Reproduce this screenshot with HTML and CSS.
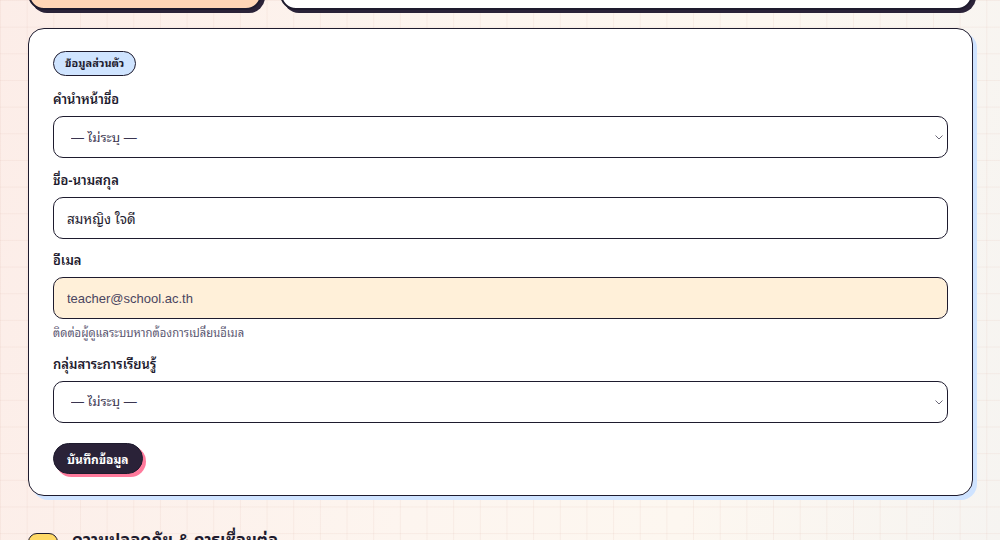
FILE: index.html
```html
<!DOCTYPE html>
<html lang="th">
<head>
<meta charset="utf-8">
<title>โปรไฟล์</title>
<link rel="stylesheet" href="styles.css">
</head>
<body>
<div class="page">
  <div class="top-row">
    <div class="top-card peach"></div>
    <div class="top-card white"></div>
  </div>

  <section class="card">
    <span class="badge">ข้อมูลส่วนตัว</span>
    <form class="form">
      <div class="field">
        <label class="label" for="prefix">คำนำหน้าชื่อ</label>
        <div class="select-wrap">
          <select id="prefix" class="control select">
            <option>— ไม่ระบุ —</option>
          </select>
          <svg class="chevron" width="8" height="5" viewBox="0 0 8 5" aria-hidden="true"><path d="M0.5 0.5 L4 4 L7.5 0.5" fill="none" stroke="#6b6878" stroke-width="1"/></svg>
        </div>
      </div>
      <div class="field">
        <label class="label" for="name">ชื่อ-นามสกุล</label>
        <input id="name" class="control" type="text" value="สมหญิง ใจดี">
      </div>
      <div class="field">
        <label class="label" for="email">อีเมล</label>
        <input id="email" class="control readonly" type="text" value="teacher@school.ac.th" readonly>
        <p class="help">ติดต่อผู้ดูแลระบบหากต้องการเปลี่ยนอีเมล</p>
      </div>
      <div class="field">
        <label class="label" for="group">กลุ่มสาระการเรียนรู้</label>
        <div class="select-wrap">
          <select id="group" class="control select">
            <option>— ไม่ระบุ —</option>
          </select>
          <svg class="chevron" width="8" height="5" viewBox="0 0 8 5" aria-hidden="true"><path d="M0.5 0.5 L4 4 L7.5 0.5" fill="none" stroke="#6b6878" stroke-width="1"/></svg>
        </div>
      </div>
      <div class="actions">
        <button type="button" class="btn">บันทึกข้อมูล</button>
      </div>
    </form>
  </section>

  <h2 class="section-title"><span class="section-icon"></span><span class="section-text">ความปลอดภัย &amp; การเชื่อมต่อ</span></h2>
</div>
</body>
</html>
```

FILE: styles.css
```css
* { box-sizing: border-box; }

html, body {
  margin: 0;
  padding: 0;
}

body {
  font-family: "Liberation Sans", "Noto Sans Thai Looped", sans-serif;
  color: #1e1b2e;
  background-color: #fdf6ef;
  background-image:
    linear-gradient(rgba(230, 200, 190, 0.22) 1px, transparent 1px),
    linear-gradient(90deg, rgba(230, 200, 190, 0.22) 1px, transparent 1px),
    linear-gradient(100deg, #fcede8 0%, #fdf5ef 45%, #fdf7f0 70%, #f6f4f1 100%);
  background-size: 26.667px 26.667px, 26.667px 26.667px, 100% 100%;
  min-height: 540px;
  overflow: hidden;
}

.page {
  padding: 0 27px 0 28px;
  margin-top: -80px;
}

.top-row {
  display: grid;
  grid-template-columns: 234px 1fr;
  gap: 18px;
}

.top-card {
  height: 90px;
  border: 2px solid #1e1b2e;
  border-radius: 16px;
  box-shadow: 3px 3px 0 #2a2238;
}

.top-card.peach { background: #ffd6b6; }
.top-card.white { background: #ffffff; }

.card {
  margin-top: 18px;
  display: flex;
  flex-direction: column;
  align-items: flex-start;
  background: #ffffff;
  border: 1.5px solid #1e1b2e;
  border-radius: 16px;
  box-shadow: 4px 4px 0 #cfe3ff;
  padding: 21.5px 24px 21px 24px;
}

.badge {
  height: 25px;
  line-height: 22px;
  padding: 0 11px;
  background: #cfe4ff;
  border: 1.5px solid #1e1b2e;
  border-radius: 999px;
  font-size: 11px;
  font-weight: 700;
}

.form {
  align-self: stretch;
  margin-top: 14.5px;
  display: flex;
  flex-direction: column;
  gap: 12.5px;
}

.field {
  display: flex;
  flex-direction: column;
}

.label {
  font-size: 13px;
  line-height: 20px;
  font-weight: 600;
  margin-bottom: 6px;
}

.control {
  display: block;
  width: 100%;
  height: 42px;
  border: 1.5px solid #1e1b2e;
  border-radius: 10px;
  background-color: #ffffff;
  padding: 0 13px;
  font-family: inherit;
  font-size: 13.5px;
  color: #1e1b2e;
  outline: none;
}

.select-wrap {
  position: relative;
}

.select {
  -webkit-appearance: none;
  appearance: none;
  color: #3a3550;
  font-size: 13px;
  padding-left: 17px;
  padding-right: 24px;
}

.chevron {
  position: absolute;
  right: 5px;
  top: 19px;
  pointer-events: none;
}

.control.readonly {
  background-color: #fff0d9;
  color: #4a4560;
  font-size: 13px;
}

.help {
  margin: 6px 0 0 0;
  font-size: 11.25px;
  line-height: 17px;
  color: #5a5670;
}

.actions {
  margin-top: 7.5px;
}

.btn {
  height: 31px;
  padding: 0 13px;
  border: 1.5px solid #1e1b2e;
  border-radius: 999px;
  background: #2a2238;
  color: #ffffff;
  font-family: inherit;
  font-size: 12px;
  font-weight: 700;
  box-shadow: 3px 3px 0 #ff7a9c;
  cursor: pointer;
}

.section-title {
  margin: 30px 0 0 0;
  display: flex;
  align-items: flex-start;
  gap: 14px;
  font-size: 16.5px;
  font-weight: 700;
  line-height: 28px;
}

.section-icon {
  margin-top: 7px;
  width: 30px;
  height: 30px;
  border-radius: 9px;
  border: 1.5px solid #1e1b2e;
  background: #ffd966;
  flex: none;
}

.section-text {
  padding-top: 0;
}
```
